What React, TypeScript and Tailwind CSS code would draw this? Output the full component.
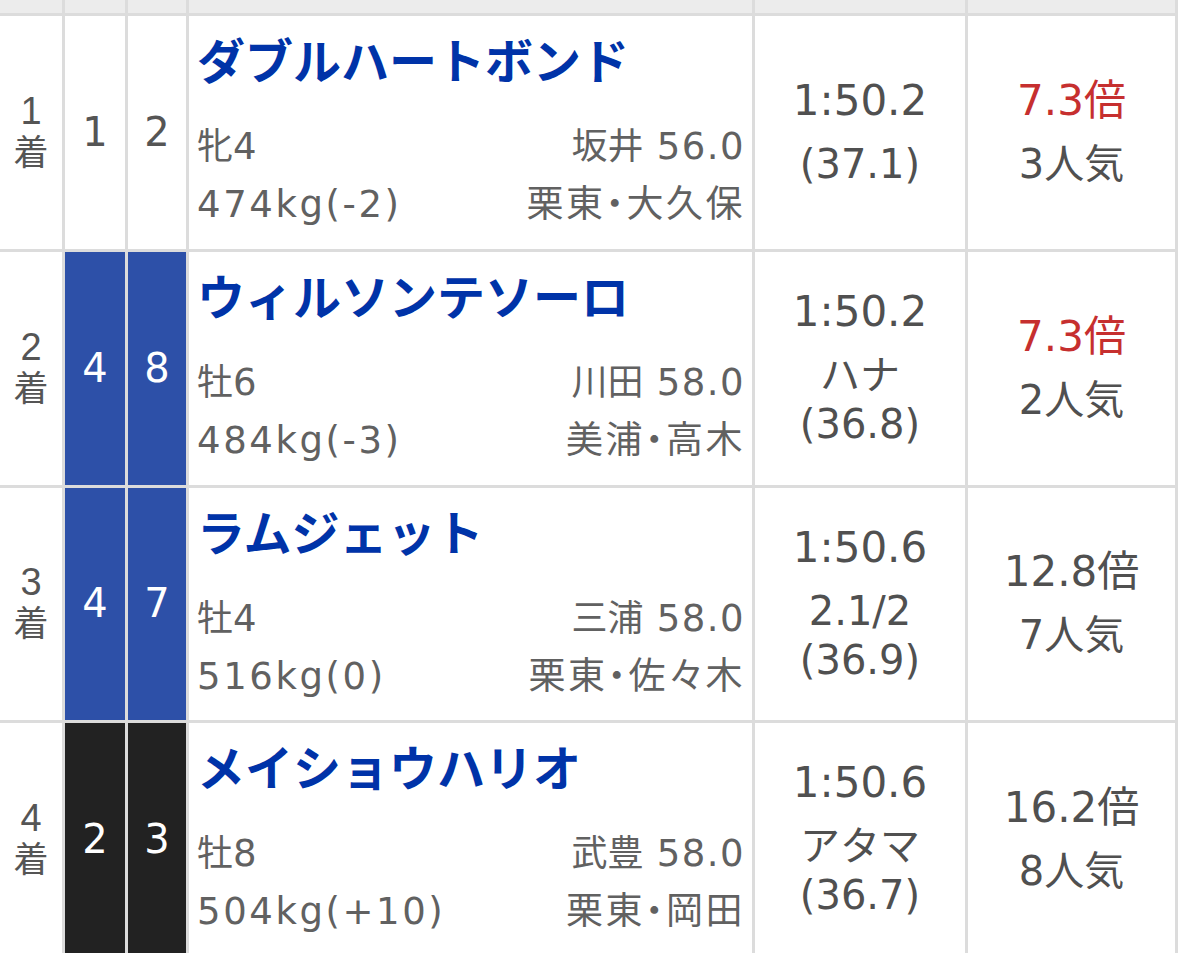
import React from 'react';

type Row = {
  rank: string;
  waku: string;
  umaban: string;
  frame: 'white' | 'blue' | 'black';
  name: string;
  sex: string;
  jockey: string;
  weight: string;
  trainer: string;
  time: string;
  margin?: string;
  last: string;
  odds: string;
  hot: boolean;
  pop: string;
};

const rows: Row[] = [
  { rank: '1', waku: '1', umaban: '2', frame: 'white', name: 'ダブルハートボンド', sex: '牝4', jockey: '坂井 56.0', weight: '474kg(-2)', trainer: '栗東・大久保', time: '1:50.2', last: '(37.1)', odds: '7.3倍', hot: true, pop: '3人気' },
  { rank: '2', waku: '4', umaban: '8', frame: 'blue', name: 'ウィルソンテソーロ', sex: '牡6', jockey: '川田 58.0', weight: '484kg(-3)', trainer: '美浦・高木', time: '1:50.2', margin: 'ハナ', last: '(36.8)', odds: '7.3倍', hot: true, pop: '2人気' },
  { rank: '3', waku: '4', umaban: '7', frame: 'blue', name: 'ラムジェット', sex: '牡4', jockey: '三浦 58.0', weight: '516kg(0)', trainer: '栗東・佐々木', time: '1:50.6', margin: '2.1/2', last: '(36.9)', odds: '12.8倍', hot: false, pop: '7人気' },
  { rank: '4', waku: '2', umaban: '3', frame: 'black', name: 'メイショウハリオ', sex: '牡8', jockey: '武豊 58.0', weight: '504kg(+10)', trainer: '栗東・岡田', time: '1:50.6', margin: 'アタマ', last: '(36.7)', odds: '16.2倍', hot: false, pop: '8人気' },
];

// latin runs are set a little wider, the reference font has wide digits
function Mixed({ text, latin }: { text: string; latin: string }) {
  const parts = text.split(/([\x20-\x7e]+)/).filter(Boolean);
  return (
    <>
      {parts.map((p, i) =>
        /^[\x20-\x7e]+$/.test(p) ? (
          <span key={i} className={latin}>
            {p}
          </span>
        ) : (
          <span key={i}>{p}</span>
        )
      )}
    </>
  );
}

const frameCls = {
  white: 'bg-white text-[#555]',
  blue: 'bg-[#2d50a8] text-white',
  black: 'bg-[#222222] text-white',
};

function ResultRow({ r }: { r: Row }) {
  return (
    <>
      <div className="flex flex-col items-center justify-center bg-white pb-[4px] font-['Liberation_Sans','Noto_Sans_CJK_JP',sans-serif] text-[#555]">
        <div className="text-[38px] leading-[44px]">{r.rank}</div>
        <div className="text-[35px] leading-[40px]">着</div>
      </div>
      <div className={`flex items-center justify-center pb-[2px] text-[40px] ${frameCls[r.frame]}`}>{r.waku}</div>
      <div className={`flex items-center justify-center pb-[2px] text-[40px] ${frameCls[r.frame]}`}>{r.umaban}</div>
      <div className="flex flex-col bg-white pt-[17px] pl-[8px] pr-[7px]">
        <div className="text-[48px] font-bold leading-[58px] text-[#0033a8]">{r.name}</div>
        <div className="mt-[27px] text-[36px] leading-[58px] text-[#616161]">
          <div className="flex justify-between">
            <span>
              <Mixed text={r.sex} latin="text-[37px]" />
            </span>
            <span>
              <Mixed text={r.jockey} latin="text-[37px] tracking-[0.04em]" />
            </span>
          </div>
          <div className="flex justify-between">
            <span>
              <Mixed text={r.weight} latin="text-[37px] tracking-[0.07em]" />
            </span>
            <span className="text-[37px] tracking-[2.5px] [font-feature-settings:'palt']">{r.trainer}</span>
          </div>
        </div>
      </div>
      <div className="flex flex-col items-center justify-center bg-white pb-[16px] text-[#505050]">
        <div className="text-[42px] leading-[79px]">{r.time}</div>
        {r.margin && <div className="text-[40px] leading-[49px]">{r.margin}</div>}
        <div className="text-[40px] leading-[49px]">{r.last}</div>
      </div>
      <div className="flex flex-col items-center justify-center bg-white pb-[16px]">
        <div className={`text-[42px] leading-[79px] ${r.hot ? 'text-[#c62f2f]' : 'text-[#505050]'}`}>
          <Mixed text={r.odds} latin="" />
        </div>
        <div className="text-[40px] leading-[49px] text-[#505050]">{r.pop}</div>
      </div>
    </>
  );
}

export default function App() {
  return (
    <div className="h-[953px] w-[1179px] overflow-hidden bg-white font-['DejaVu_Sans','Noto_Sans_CJK_JP',sans-serif]">
      <div className="grid w-[1178px] grid-cols-[62px_60px_58px_563px_210px_207px] grid-rows-[13px_233px_233px_232px_233px] gap-[3px] bg-[#dcdcdc] pr-[3px]">
        <div className="bg-[#ececec]" />
        <div className="bg-[#ececec]" />
        <div className="bg-[#ececec]" />
        <div className="bg-[#ececec]" />
        <div className="bg-[#ececec]" />
        <div className="bg-[#ececec]" />
        {rows.map((r) => (
          <ResultRow key={r.rank} r={r} />
        ))}
      </div>
    </div>
  );
}
